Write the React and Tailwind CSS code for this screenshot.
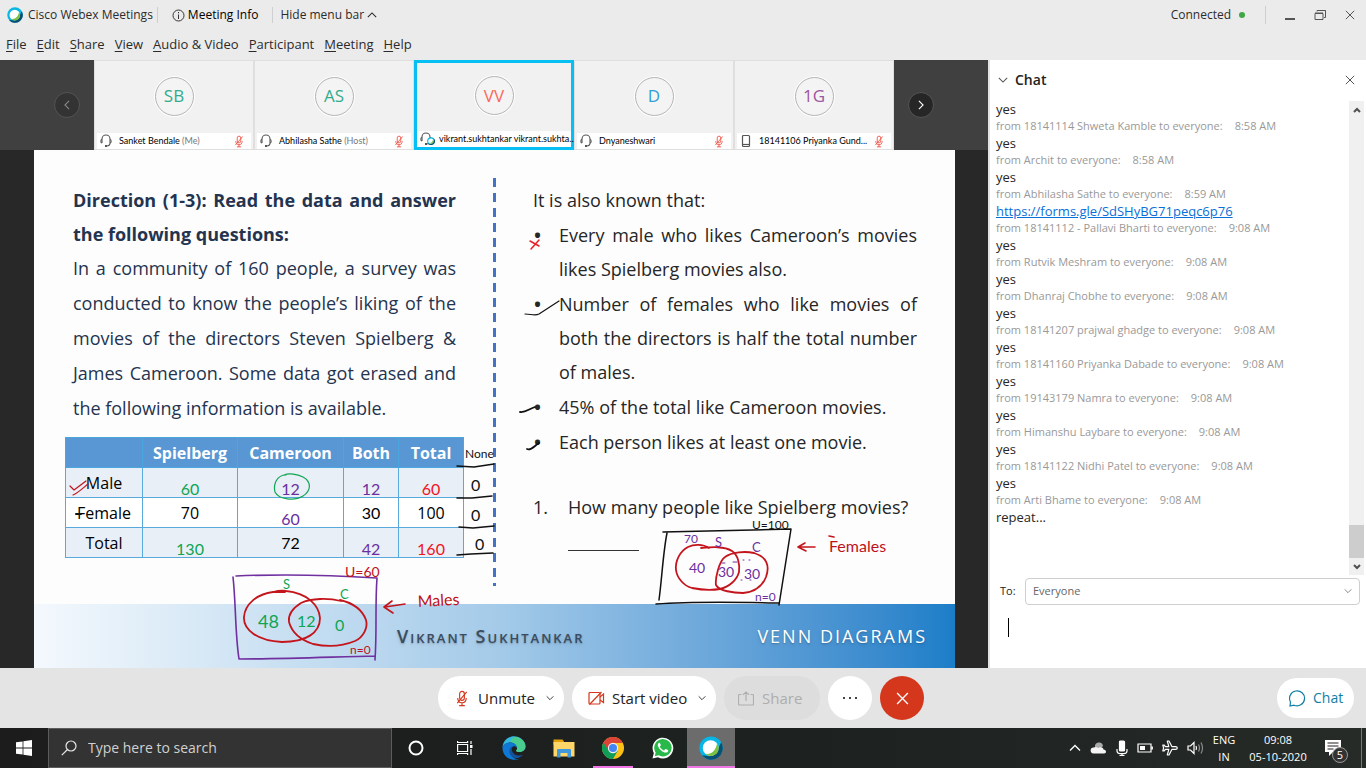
import React from 'react';

function WebexLogo({ className }) {
  return (
    <svg viewBox="0 0 32 32" className={className} aria-hidden="true">
      <circle cx="16" cy="16" r="15.5" fill="#07b6e4" />
      <path d="M29.500 8.300A15.500 15.500 0 0 1 4 25.800L15 27 26 16Z" fill="#0a4f74" />
      <circle cx="15.500" cy="16" r="10.500" fill="#fff" />
      <path d="M26 14.500a10.500 10.500 0 0 1-17.500 9.300C17 25 22.500 19 24 10c1.300 1.300 2 2.800 2 4.500Z" fill="#7bc143" />
    </svg>
  );
}

function Headset({ className }) {
  return (
    <svg viewBox="0 0 14 14" className={className} fill="none" stroke="#555" strokeWidth="1.1" aria-hidden="true">
      <path d="M3 9V5a4 4 0 0 1 8 0v4" />
      <path d="M3 5.500C1.500 5.500 1.500 9 3 9M11 5.500c1.500 0 1.500 3.500 0 3.500" />
      <path d="M11 9c0 2-1.500 3-3.500 3" />
      <path d="M6 12h2" strokeWidth="2" />
    </svg>
  );
}

function MutedMic({ className }) {
  return (
    <svg viewBox="0 0 14 18" className={className} fill="none" stroke="currentColor" strokeWidth="1.200" aria-hidden="true">
      <rect x="4.500" y="1.500" width="5" height="9.500" rx="2.500" />
      <path d="M2.500 8.500c0 3.500 2 5 4.500 5s4.500-1.500 4.500-5M7 13.500v3M4 16.500h6M12 2 2 14" />
    </svg>
  );
}

function Chevron({ dir, className }) {
  const paths = {
    up: 'M1 8.500 6 3.500l5 5',
    down: 'M1 3.500l5 5 5-5',
    left: 'M8.500 1l-5 5 5 5',
    right: 'M3.500 1l5 5-5 5',
  };
  return (
    <svg viewBox="0 0 12 12" className={className} fill="none" stroke="currentColor" strokeWidth="1.300" aria-hidden="true">
      <path d={paths[dir]} />
    </svg>
  );
}

function Cross({ className }) {
  return (
    <svg viewBox="0 0 12 12" className={className} fill="none" stroke="currentColor" strokeWidth="1.200" aria-hidden="true">
      <path d="M1 1l10 10M11 1 1 11" />
    </svg>
  );
}

const menus = ['File', 'Edit', 'Share', 'View', 'Audio & Video', 'Participant', 'Meeting', 'Help'];

function Header() {
  return (
    <header className="flex h-[60px] flex-col bg-[#ebebeb] text-[#2b2b2b]">
      <div className="flex h-[30px] items-center text-xs">
        <WebexLogo className="ml-[7px] size-4" />
        <span className="ml-[5px]">Cisco Webex Meetings</span>
        <span className="ml-1 h-4 w-px bg-[#cfcfcf]" />
        <button className="ml-[14px] flex items-center gap-[3px] text-black">
          <svg viewBox="0 0 13 13" className="size-[13px]" fill="none" stroke="#333" aria-hidden="true">
            <circle cx="6.500" cy="6.500" r="5.500" />
            <path d="M6.500 5.500V10M6.500 3v1.300" />
          </svg>
          Meeting Info
        </button>
        <span className="ml-[14px] h-4 w-px bg-[#cfcfcf]" />
        <button className="ml-[7px] flex items-center gap-[3px]">
          Hide menu bar <Chevron dir="up" className="size-[10px]" />
        </button>
        <div className="ml-auto flex items-center">
          <span>Connected</span>
          <span className="ml-2 size-[6px] rounded-full bg-[#3fa845]" />
          <span className="ml-5 h-[18px] w-px bg-[#cfcfcf]" />
          <button aria-label="Minimize" className="ml-[19px] flex h-3 w-[10px] items-end pb-px">
            <span className="h-[2px] w-[10px] bg-[#555]" />
          </button>
          <button aria-label="Restore" className="ml-[19px]">
            <svg viewBox="0 0 12 12" className="size-3" fill="none" stroke="#555" aria-hidden="true">
              <path d="M1 4.500h8v6H1zM1 4h8" />
              <path d="M3 2.500v-1h8.500v7H10M3 1.500h8.500" />
            </svg>
          </button>
          <button aria-label="Close" className="mr-[11px] ml-[19px] text-[#555]">
            <Cross className="size-[10px]" />
          </button>
        </div>
      </div>
      <nav className="flex h-[30px] items-center gap-[10px] pl-[6px] text-[13px]">
        {menus.map((m) => (
          <button key={m}>
            <span className="underline underline-offset-2">{m[0]}</span>
            {m.slice(1)}
          </button>
        ))}
      </nav>
    </header>
  );
}

const people = [
  { initials: 'SB', name: 'Sanket Bendale', role: '(Me)', color: 'text-[#34ab8c]', muted: true },
  { initials: 'AS', name: 'Abhilasha Sathe', role: '(Host)', color: 'text-[#34ab8c]', muted: true },
  { initials: 'VV', name: 'vikrant.sukhtankar vikrant.sukhta...', color: 'text-[#f8695c]', active: true },
  { initials: 'D', name: 'Dnyaneshwari', color: 'text-[#2f9fd8]', muted: true },
  { initials: '1G', name: '18141106 Priyanka Gund...', color: 'text-[#9c56a0]', muted: true, phone: true },
];

function Tile({ p }) {
  return (
    <li
      className={
        p.active
          ? 'flex w-40 flex-col border-3 border-[#06bff3] bg-[#f1f1f1]'
          : 'flex w-40 flex-col border border-[#dfdfdf] bg-[#f1f1f1] px-[2px] pt-px'
      }
    >
      <div className="flex flex-1 items-center justify-center pb-[3px]">
        <div className="rounded-full bg-white p-px">
          <div className={`flex size-[39px] items-center justify-center rounded-full border border-[#b3b3b3] bg-[#f4f4f4] text-[17px] ${p.color}`}>
            {p.initials}
          </div>
        </div>
      </div>
      <div className="flex h-4 items-center bg-white font-[Lato] text-[9px] text-black">
        <span className="relative ml-[2px] flex w-5 shrink-0">
          {p.phone ? (
            <svg viewBox="0 0 14 14" className="size-[14px]" fill="none" stroke="#555" strokeWidth="1.200" aria-hidden="true">
              <rect x="3.500" y="1.500" width="7" height="11" rx="1" />
              <path d="M3.500 10.500h7" />
            </svg>
          ) : (
            <Headset className="size-[14px]" />
          )}
          {p.active && <WebexLogo className="absolute top-[5px] left-[8px] size-2" />}
        </span>
        <span className="whitespace-nowrap">
          {p.name} {p.role && <span className="text-[#777]">{p.role}</span>}
        </span>
        {p.muted && <MutedMic className="mr-[7px] ml-auto h-[13px] w-[10px] shrink-0 text-[#ef4b3e]" />}
      </div>
    </li>
  );
}

function Filmstrip() {
  return (
    <div className="flex h-[90px] bg-[#404040]">
      <div className="flex flex-1 items-center justify-end pr-[14px]">
        <button aria-label="Previous" className="flex size-[26px] items-center justify-center rounded-full border border-[#545454] bg-[#333] text-[#888]">
          <Chevron dir="left" className="size-[10px]" />
        </button>
      </div>
      <ul className="flex">
        {people.map((p) => (
          <Tile key={p.initials} p={p} />
        ))}
      </ul>
      <div className="flex flex-1 items-center pl-[14px]">
        <button aria-label="Next" className="flex size-[26px] items-center justify-center rounded-full border border-[#545454] bg-[#262626] text-white">
          <Chevron dir="right" className="size-[10px]" />
        </button>
      </div>
    </div>
  );
}

const green = 'text-[#0fa553]';
const purple = 'text-[#6b2fa0]';
const red = 'text-[#f0141e]';
const ink = 'font-[Lato] pt-3 leading-4';
const rows = [
  ['Male', ['60', `${ink} ${green}`], ['12', `${ink} ${purple}`], ['12', `${ink} ${purple}`], ['60', `${ink} ${red}`]],
  ['Female', ['70', ''], ['60', `${ink} ${purple}`], ['30', 'font-[Lato]'], ['100', '']],
  ['Total', ['130', `${ink} ${green}`], ['72', 'font-[Lato]'], ['42', `${ink} ${purple}`], ['160', `${ink} ${red}`]],
];

function DataTable() {
  return (
    <table className="mt-[11px] w-[398px] table-fixed border-collapse border border-[#5b9bd5] text-center text-base leading-5 text-black">
      <colgroup>
        <col className="w-[77px]" />
        <col className="w-[95px]" />
        <col className="w-[106px]" />
        <col className="w-[55px]" />
        <col className="w-[65px]" />
      </colgroup>
      <thead>
        <tr className="h-[30px] bg-[#5897d3] text-white">
          {['', 'Spielberg', 'Cameroon', 'Both', 'Total'].map((h) => (
            <th key={h} className="border border-[#4aa6dd] p-0 font-bold">{h}</th>
          ))}
        </tr>
      </thead>
      <tbody>
        {rows.map(([label, ...cells], r) => (
          <tr key={label} className={r % 2 ? 'h-[30px] bg-white' : 'h-[30px] bg-[#e9eff7]'}>
            <th className="border border-[#5aa9dd] p-0 font-normal">{label}</th>
            {cells.map(([v, c], i) => (
              <td key={i} className={`border border-[#5aa9dd] p-0 ${c}`}>{v}</td>
            ))}
          </tr>
        ))}
      </tbody>
    </table>
  );
}

function Annotations() {
  return (
    <svg viewBox="34 150 921 518" className="pointer-events-none absolute top-0 left-0 h-[518px] w-[921px] font-[Lato]" fill="none" strokeLinecap="round" strokeLinejoin="round">
      <g stroke="#c4151c" strokeWidth="1.200">
        <path d="M70 486l4 4 12-9M73 495c5-2 10-7 15-11" />
        <path d="M273 592c-16 2-28 12-29 25-1 13 14 24 38 25 24 0 38-9 38-24-1-13-13-25-34-27-5-1-9 0-13 1h12" strokeWidth="1.800" />
        <path d="M341 601c-12-3-30-3-40 2-8 5-13 12-12 19 3 11 12 18 24 22 14 3 30 2 42-3 9-4 13-14 11-21-4-11-13-17-26-20" strokeWidth="1.800" />
        <path d="M405 604l-20 3M392 601l-8 6 9 6" strokeWidth="1.600" />
        <path d="M709 548c-6-4-15-4-21-1-8 4-13 14-12 23 1 8 8 16 16 18 10 2 22 2 28 1 9-2 17-9 19-17 1-8-1-17-7-21-8-5-20-4-31-3" strokeWidth="1.800" />
        <path d="M754 553c-9-2-22-1-29 4-6 4-10 22-9 28 3 6 18 8 27 8 12-1 19-6 23-16 4-11 1-20-12-24" strokeWidth="1.800" />
        <path d="M815 547h-16M805 543l-7 4 8 4" strokeWidth="1.600" />
        <path d="M530 241l9 5M539 240l-8 9" stroke="#e8222b" strokeWidth="1.500" />
        <path d="M829 536l5 1" strokeWidth="1.600" />
      </g>
      <path d="M286 475c-9 0-13 9-11 17 4 8 20 9 28 4 8-5 9-14 0-19-6-3-14-4-19-2" stroke="#0fa553" strokeWidth="1.200" />
      <g stroke="#111" strokeWidth="1.500">
        <path d="M457 466l17 1 20-3M457 498l15 0 20-2M459 527l14 1 21-2M457 555l14-1 22-1" />
        <path d="M76 514h5" strokeWidth="2" />
        <path d="M525 314c6 0 10 2 14 0l20-13" strokeWidth="1.200" />
        <path d="M520 412c5 1 9-3 15-5M527 449c4 2 7-3 12-6" strokeWidth="1.800" />
        <path d="M663 532l128-3c-4 25-8 50-12 76M667 533c-4 20-5 45-8 67M656 604c40-3 80-2 123-1" />
      </g>
      <path d="M236 576c46-2 94-1 141 2-2 27 0 52-2 82M233 577c3 27 2 56 6 82 45 0 92-2 136-3" stroke="#7030a0" strokeWidth="1.600" />
      <path d="M722 563h3M733 562h4M743 560h1M749 560h1M741 580h1M750 580h1" stroke="#7030a0" />
      <g stroke="none" fontSize="14" fill="#bf1219">
        <text x="345" y="577">U=60</text>
        <text x="350" y="654" fontSize="12">n=0</text>
        <text x="418" y="607" fontSize="16" transform="rotate(-3 418 607)">Males</text>
        <text x="829" y="552" fontSize="16">Females</text>
      </g>
      <g stroke="none" fontSize="16" fill="#0fa553">
        <text x="283" y="589" fontSize="13">S</text>
        <text x="340" y="599" fontSize="13">C</text>
        <text x="258" y="628" fontSize="18">48</text>
        <text x="297" y="627">12</text>
        <text x="335" y="631">0</text>
      </g>
      <g stroke="none" fontSize="14" fill="#6b2fa0">
        <text x="684" y="543" fontSize="12">70</text>
        <text x="715" y="547" fontSize="13">S</text>
        <text x="752" y="552" fontSize="13">C</text>
        <text x="689" y="573">40</text>
        <text x="718" y="577">30</text>
        <text x="744" y="579">30</text>
        <text x="755" y="601" fontSize="12">n=0</text>
      </g>
      <g stroke="none" fontSize="14" fill="#111">
        <text x="752" y="529" fontSize="12">U=100</text>
        <text x="465" y="458" fontSize="12">None</text>
        <text x="471" y="491" fontSize="16">0</text>
        <text x="471" y="521" fontSize="16">0</text>
        <text x="475" y="550" fontSize="16">0</text>
      </g>
    </svg>
  );
}

const facts = [
  'Every male who likes Cameroon’s movies likes Spielberg movies also.',
  'Number of females who like movies of both the directors is half the total number of males.',
  '45% of the total like Cameroon movies.',
  'Each person likes at least one movie.',
];

function Slide() {
  return (
    <article className="relative flex flex-1 flex-col bg-[#fdfdfd] text-lg">
      <div className="flex flex-1">
        <section className="pt-[33px] pl-[31px] text-[#24344f]">
          <div className="w-[391px] pl-2 text-justify">
            <h2 className="leading-[34px] font-bold">Direction (1-3): Read the data and answer the following questions:</h2>
            <p className="leading-[35px]">
              In a community of 160 people, a survey was conducted to know the people’s liking of the movies of the directors Steven Spielberg &amp; James Cameroon. Some data got erased and the following information is available.
            </p>
          </div>
          <DataTable />
        </section>
        <div className="mt-7 ml-[29px] h-[408px] w-[3px] bg-[repeating-linear-gradient(to_bottom,#4472c4_0px_9px,transparent_9px_15px)]" />
        <section className="ml-[37px] w-96 pt-[33px] text-[#262626]">
          <p className="leading-[35px]">It is also known that:</p>
          <ul className="flex flex-col gap-px">
            {facts.map((f) => (
              <li key={f} className="flex leading-[34px]">
                <span className="w-[26px] shrink-0 text-2xl leading-[34px]">•</span>
                <span className="flex-1 text-justify">{f}</span>
              </li>
            ))}
          </ul>
          <ol className="mt-[31px]">
            <li className="flex leading-[34px]">
              <span className="w-[35px] shrink-0">1.</span>
              <span className="whitespace-nowrap">How many people like Spielberg movies?</span>
            </li>
          </ol>
          <div className="mt-[26px] ml-[35px] h-px w-[71px] bg-[#333]" />
        </section>
      </div>
      <footer className="flex h-16 items-center justify-between bg-linear-to-r from-[#f4f9fd] via-[#a5cbe9] to-[#1a7ec8] pr-7 pl-[363px]">
        <span className="text-lg font-semibold tracking-[2px] text-[#3c4c5e] [font-variant:small-caps] text-shadow-md">Vikrant Sukhtankar</span>
        <span className="text-lg tracking-[2px] text-white text-shadow-md">VENN DIAGRAMS</span>
      </footer>
      <Annotations />
    </article>
  );
}

const chat = [
  ['yes'],
  ['yes', '18141114 Shweta Kamble', '8:58 AM'],
  ['yes', 'Archit', '8:58 AM'],
  ['https://forms.gle/SdSHyBG71peqc6p76', 'Abhilasha Sathe', '8:59 AM'],
  ['yes', '18141112 - Pallavi Bharti', '9:08 AM'],
  ['yes', 'Rutvik Meshram', '9:08 AM'],
  ['yes', 'Dhanraj Chobhe', '9:08 AM'],
  ['yes', '18141207 prajwal ghadge', '9:08 AM'],
  ['yes', '18141160 Priyanka Dabade', '9:08 AM'],
  ['yes', '19143179 Namra', '9:08 AM'],
  ['yes', 'Himanshu Laybare', '9:08 AM'],
  ['yes', '18141122 Nidhi Patel', '9:08 AM'],
  ['repeat...', 'Arti Bhame', '9:08 AM'],
];

function ChatPanel() {
  return (
    <aside className="flex w-[378px] flex-col border-l-2 border-[#e4e4e4] bg-white">
      <div className="flex h-[41px] items-center pb-px pl-2">
        <button className="flex items-center gap-[7px] text-sm font-semibold text-[#222]">
          <Chevron dir="down" className="size-[10px] text-[#555]" />
          Chat
        </button>
        <button aria-label="Close chat" className="mr-[11px] ml-auto text-[#555]">
          <Cross className="size-[10px]" />
        </button>
      </div>
      <div className="flex flex-1">
        <ol className="flex-1 pl-[6px]">
          {chat.map(([text, who, time], i) => (
            <li key={i}>
              {who && (
                <p className="flex h-4 items-center gap-3 pb-[2px] text-[11px] text-[#999]">
                  <span>from {who} to everyone:</span>
                  <time>{time}</time>
                </p>
              )}
              <p className="flex h-[18px] items-center text-[13px] text-[#262626]">
                {text.startsWith('http') ? <a href={text} className="text-[#0a6fd8] underline">{text}</a> : text}
              </p>
            </li>
          ))}
        </ol>
        <div className="mr-[2px] flex w-[15px] flex-col bg-[#f0f0f0] text-[#505050]">
          <button aria-label="Scroll up" className="flex h-[17px] items-center justify-center">
            <svg viewBox="0 0 8 6" className="h-[6px] w-2" fill="none" stroke="currentColor" strokeWidth="2" aria-hidden="true"><path d="M1 5l3-3 3 3" /></svg>
          </button>
          <div className="mt-auto h-[33px] bg-[#cdcdcd]" />
          <button aria-label="Scroll down" className="flex h-[17px] items-center justify-center">
            <svg viewBox="0 0 8 6" className="h-[6px] w-2" fill="none" stroke="currentColor" strokeWidth="2" aria-hidden="true"><path d="M1 1l3 3 3-3" /></svg>
          </button>
        </div>
      </div>
      <div className="mt-[3px] flex items-center pr-[6px] pl-[10px] text-[11px]">
        <label htmlFor="to" className="w-[25px] text-[#222]">To:</label>
        <div className="relative flex-1">
          <select id="to" className="block h-[27px] w-full appearance-none rounded-sm border border-[#cfcfcf] bg-white px-[7px] text-[#666]">
            <option>Everyone</option>
          </select>
          <Chevron dir="down" className="pointer-events-none absolute top-[9px] right-2 size-2 text-[#777]" />
        </div>
      </div>
      <div className="relative h-[63px]">
        <textarea aria-label="Message" className="block h-full w-full resize-none px-[18px] pt-3 text-sm outline-none" />
        <span className="absolute top-[13px] left-[18px] h-[19px] w-px bg-black" />
      </div>
    </aside>
  );
}

function Controls() {
  const pill = 'flex h-11 items-center rounded-full bg-white text-[15px] text-[#222]';
  return (
    <div className="grid h-[60px] grid-cols-[1fr_auto_1fr] items-center bg-[#e4e4e4]">
      <div />
      <div className="mr-1 flex gap-2">
        <div className={`${pill} w-[126px]`}>
          <button className="ml-4 flex items-center gap-2">
            <MutedMic className="h-[17px] w-4 text-[#d4371c]" />
            Unmute
          </button>
          <button aria-label="Audio options" className="mr-[10px] ml-auto"><Chevron dir="down" className="size-2" /></button>
        </div>
        <div className={`${pill} w-36`}>
          <button className="ml-4 flex items-center gap-[7px]">
            <svg viewBox="0 0 17 15" className="h-[15px] w-[17px]" fill="none" stroke="#d4371c" strokeWidth="1.200" aria-hidden="true">
              <rect x="1" y="1.500" width="11" height="11.500" rx="1" />
              <path d="M12 6l3.500-3v8.500L12 9M1.500 13.500 13.500 1" />
            </svg>
            Start video
          </button>
          <button aria-label="Video options" className="mr-[10px] ml-auto"><Chevron dir="down" className="size-2" /></button>
        </div>
        <button disabled className="flex h-11 w-24 items-center gap-2 rounded-full bg-[#dddddd] pl-[14px] text-[15px] text-[#aeaeae]">
          <svg viewBox="0 0 16 15" className="h-[15px] w-4" fill="none" stroke="#b0b0b0" strokeWidth="1.200" aria-hidden="true">
            <path d="M3.500 3.500h-2q-1 0-1 1V13q0 1 1 1h13q1 0 1-1V4.500q0-1-1-1h-2M8 10V1M5 3.800 8 1l3 2.800" />
          </svg>
          Share
        </button>
        <button aria-label="More options" className="flex size-11 items-center justify-center rounded-full bg-white">
          <svg viewBox="0 0 16 4" className="h-1 w-4" fill="#444" aria-hidden="true"><path d="M1 1h2v2H1zM7 1h2v2H7zM13 1h2v2h-2z" /></svg>
        </button>
        <button aria-label="Leave meeting" className="flex size-11 items-center justify-center rounded-full bg-[#d4371c] text-white">
          <Cross className="size-[13px]" />
        </button>
      </div>
      <button className="mr-3 flex h-10 w-[77px] items-center gap-[7px] justify-self-end rounded-full bg-white pl-3 text-sm text-[#0f7fa5]">
        <svg viewBox="0 0 17 17" className="size-[17px]" fill="none" stroke="currentColor" strokeWidth="1.200" aria-hidden="true">
          <path d="M1 16l.5-4A7.500 7.500 0 1 1 5 15.200Z" />
        </svg>
        Chat
      </button>
    </div>
  );
}

function Taskbar() {
  return (
    <footer className="flex h-10 items-stretch bg-linear-to-r from-[#1c1c1c] via-[#1d2220] via-60% to-[#262b28] text-[11px] text-white">
      <button aria-label="Start" className="flex w-12 items-center justify-center">
        <svg viewBox="0 0 16 16" className="size-4" fill="#fff" aria-hidden="true">
          <path d="M0 2.300 6.600 1.400v6.200H0zM7.400 1.300 16 0v7.600H7.400zM0 8.400h6.600v6.200L0 13.700zM7.400 8.400H16V16l-8.600-1.300z" />
        </svg>
      </button>
      <label className="flex w-[344px] items-center gap-[11px] border border-[#5c5c5c] bg-[#333] pl-3">
        <svg viewBox="0 0 16 16" className="size-4" fill="none" stroke="#e8e8e8" strokeWidth="1.200" aria-hidden="true">
          <circle cx="10" cy="6" r="5" />
          <path d="M6.500 9.500 .8 15.200" />
        </svg>
        <input aria-label="Search" placeholder="Type here to search" className="w-64 bg-transparent text-sm outline-none placeholder:text-[#d0d0d0]" />
      </label>
      <button aria-label="Cortana" className="flex w-12 items-center justify-center">
        <svg viewBox="0 0 16 16" className="size-4" fill="none" stroke="#fff" strokeWidth="2" aria-hidden="true"><circle cx="8" cy="8" r="6.500" /></svg>
      </button>
      <button aria-label="Task view" className="flex w-[49px] items-center justify-center">
        <svg viewBox="0 0 16 16" className="size-4" fill="none" stroke="#fff" strokeWidth="1.200" aria-hidden="true">
          <path d="M.6 4.500h10v7H.6zM.6 1v1.500h10V1M.6 15v-1.500h10V15M14 1v3M14 9v6" />
          <path d="M13 5h2.500v3H13z" fill="#fff" stroke="none" />
        </svg>
      </button>
      <button aria-label="Edge" className="flex w-[50px] items-center justify-center">
        <svg viewBox="0 0 24 24" className="size-6" aria-hidden="true">
          <path d="M.5 12C.5 5 6 .3 12 .3S23.500 5 23.500 10.500c0 3-2.500 5.500-6 5.500-2 0-3.300-.6-3.300-1.300 0-.6.900-1 .9-2.500C15 9 12 6.500 8.500 6.500 4 6.500.5 9.500.5 12Z" fill="#35b8e0" />
          <path d="M14 1c5 .5 9.500 4.500 9.500 9.500 0 3-2.500 5.500-6 5.500-2 0-3.300-.6-3.300-1.300 0-.6.900-1 .9-2.500 0-4-4-6-7-6C9 3 11 1 14 1Z" fill="#4fcf80" opacity=".85" />
          <path d="M.5 12c0-3 3.500-5.500 8-5.500 3.500 0 6.500 2.500 6.500 5.500-1-1.500-2.500-2-4-1.500-2.500 1-3.500 4-2.500 7 1.200 3.500 5 6 8.500 5.500-1.500.6-3 .8-4.500.8C5.500 23.800.5 18.500.5 12Z" fill="#0f78d4" />
          <path d="M9 11.500c-2 1.500-2.200 5 0 8 2.500 3 7 3.800 11 .3.800-.7.5-1.300-.5-.9-4 1.500-8.500-.5-9.500-4-.4-1.400 0-2.700.7-3.700Z" fill="#14529c" />
        </svg>
      </button>
      <button aria-label="File Explorer" className="flex w-[49px] items-center justify-center">
        <svg viewBox="0 0 22 20" className="h-5 w-[22px]" aria-hidden="true">
          <path d="M.5 1.500h9l1.500 2v3H.5z" fill="#e5a00d" />
          <path d="M.5 4h21v14.500H.5z" fill="#ffd667" />
          <path d="M4 19.500V12q0-1 1-1h12q1 0 1 1v7.500h-3.500V15h-7v4.500z" fill="#3f97dc" />
        </svg>
      </button>
      <button aria-label="Chrome" className="flex w-[50px] items-center justify-center">
        <span className="flex h-full w-10 items-center justify-center border-b-2 border-[#f075e5] pt-[2px]">
          <svg viewBox="0 0 24 24" className="size-[22px]" aria-hidden="true">
            <circle cx="12" cy="12" r="12" fill="#fbc116" />
            <path d="M1.600 6A12 12 0 0 0 12 24l5.200-9L12 12Z" fill="#109d58" />
            <path d="M12 6.500h10.700A12 12 0 0 0 1.600 6l5.700 9Z" fill="#db4437" />
            <circle cx="12" cy="12" r="5.600" fill="#f1f1f1" />
            <circle cx="12" cy="12" r="4.400" fill="#4285f4" />
          </svg>
        </span>
      </button>
      <button aria-label="WhatsApp" className="flex w-[49px] items-center justify-center">
        <svg viewBox="0 0 24 24" className="size-[22px]" aria-hidden="true">
          <path d="M.5 23.500 2 17.500A11.300 11.300 0 1 1 6.500 22Z" fill="#fff" />
          <path d="M3 21l1-4A9.500 9.500 0 1 1 7.200 20Z" fill="#29b84a" />
          <path d="M8.500 6.500c-.4-.4-1-.3-1.400.2-.9 1-1 2.300-.4 3.700 1.300 3 3.800 5.300 6.900 6.400 1.600.5 3 .2 3.800-1.100.4-.7.400-1.300.1-1.500l-2.300-1.100c-.4-.2-.7-.1-1 .3l-.8 1c-.3.300-.6.300-1 .1-1.700-.8-2.900-2-3.700-3.500-.2-.4-.1-.6.200-.9l.6-.8c.2-.3.2-.5.1-.8z" fill="#fff" />
        </svg>
      </button>
      <button aria-label="Webex" className="flex w-12 items-center justify-center border-b-2 border-[#f075e5] bg-[#6c6c6c] pt-[2px]">
        <WebexLogo className="size-6" />
      </button>
      <div className="ml-auto flex items-center">
        <div className="flex items-center gap-[9px]">
          <Chevron dir="up" className="size-3" />
          <svg viewBox="0 0 17 12" className="h-3 w-[17px]" aria-hidden="true">
            <path d="M5 5a4 4 0 0 1 8-1l-3 3z" fill="#aaa" />
            <path d="M3.500 11.500a3 3 0 0 1 .3-6c1.500-1 3.500-.6 4.500.5 2-1.500 5-.5 5.200 1.500 3 0 3.500 4 .5 4z" fill="#f4f4f4" />
          </svg>
          <svg viewBox="0 0 12 16" className="h-4 w-3" fill="none" stroke="#fff" strokeWidth="1.200" aria-hidden="true">
            <rect x="3.500" y="1" width="5" height="10" rx="1" fill="#fff" />
            <path d="M1 9v2q0 2.500 3 2.500h4q3 0 3-2.500V9M6 13.500v2M3.500 15.400h5" />
          </svg>
          <svg viewBox="0 0 16 10" className="h-[10px] w-4" fill="none" stroke="#fff" strokeWidth="1.200" aria-hidden="true">
            <path d="M1 1h13v8H1zM15.300 3.500v3" />
            <path d="M3 3h5v4H3z" fill="#fff" stroke="none" />
          </svg>
          <svg viewBox="0 0 16 16" className="size-4" fill="none" stroke="#fff" strokeWidth="1.200" strokeLinejoin="round" aria-hidden="true">
            <path d="M15.300 8q0-1.300-1.800-1.300H10L7 1H5.300l1.500 5.700H3.500L2 5H.8l.8 3-.8 3H2l1.500-1.700h3.300L5.300 15H7l3-5.700h3.500q1.800 0 1.800-1.300Z" />
          </svg>
          <svg viewBox="0 0 17 14" className="h-[14px] w-[17px]" fill="none" stroke="#fff" strokeWidth="1.200" aria-hidden="true">
            <path d="M1 5h2.500L7 1.500v11L3.500 9H1zM9 5q1 2 0 4" />
            <path d="M11.500 3.500q2 3.500 0 7M14 1.500q3 5.500 0 11" stroke="#8a8f8c" />
          </svg>
        </div>
        <div className="ml-2 w-6 text-center leading-[17px]">ENG<br />IN</div>
        <div className="ml-[10px] w-16 text-center leading-[17px] whitespace-nowrap">09:08<br />05-10-2020</div>
        <button aria-label="Notifications, 5 new" className="relative ml-[14px] h-10 w-7">
          <svg viewBox="0 0 16 16" className="absolute top-3 left-[1px] size-4" aria-hidden="true">
            <path d="M0 0h16v12H8l-4 4v-4H0z" fill="#fff" />
            <path d="M2.500 3h11M2.500 6h11M2.500 9h6" stroke="#222" />
          </svg>
          <span className="absolute top-[19px] left-2 flex size-4 items-center justify-center rounded-full border border-[#999] bg-[#333] text-[11px]">5</span>
        </button>
        <div className="mr-1 ml-[9px] h-10 w-px bg-[#777]" />
      </div>
    </footer>
  );
}

export default function App() {
  return (
    <div className="flex min-h-screen flex-col bg-[#e4e4e4] font-['Open_Sans','Noto_Sans',sans-serif]">
      <Header />
      <main className="flex flex-1">
        <div className="flex flex-1 flex-col">
          <Filmstrip />
          <div className="flex flex-1 bg-[#282828] pr-[33px] pl-[34px]">
            <Slide />
          </div>
        </div>
        <ChatPanel />
      </main>
      <Controls />
      <Taskbar />
    </div>
  );
}
